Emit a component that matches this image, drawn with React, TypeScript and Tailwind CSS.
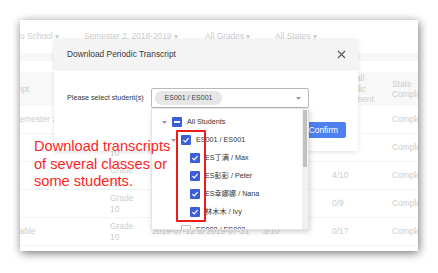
import React from 'react';

const font = { fontFamily: '"Liberation Sans", "Noto Sans CJK SC", Arial, sans-serif' };

type CheckState = 'all' | 'some' | 'none';

const Box = ({ state }: { state: CheckState }) => {
  if (state === 'none') {
    return <span className="block w-[10px] h-[10px] shrink-0 border border-[#bdbdbd] bg-white rounded-[1px]" />;
  }
  return (
    <span className="flex w-[10px] h-[10px] shrink-0 items-center justify-center bg-[#3d5ed8] rounded-[1px]">
      {state === 'some' ? (
        <span className="block w-[6px] h-[1.5px] bg-white" />
      ) : (
        <svg width="8" height="8" viewBox="0 0 8 8">
          <path d="M1.4 4.1 L3.2 5.9 L6.6 2.1" fill="none" stroke="#fff" strokeWidth="1.3" />
        </svg>
      )}
    </span>
  );
};

const Caret = () => (
  <svg width="5" height="3" viewBox="0 0 5 3" className="shrink-0">
    <polygon points="0,0 5,0 2.5,3" fill="#9a9a9a" />
  </svg>
);

const students = ['ES丁满 / Max', 'ES彭彭 / Peter', 'ES幸娜娜 / Nana', '林木木 / Ivy'];

const rows = [
  { c1: <span className="-ml-[6px]">Semester 2</span>, date: '', sub: '', done: '' },
  { c1: null, date: '', sub: '', done: '' },
  { c1: null, date: '', sub: '', done: '4/10' },
  { c1: null, date: '', sub: '', done: '0/9' },
  { c1: <span className="-ml-[33px]">Not available</span>, date: '2019-07-12 to 2019-07-31', sub: '3/10', done: '0/17' },
];

export default function App() {
  return (
    <div className="w-[438px] h-[273px] bg-white pl-[20px] pt-[20px]" style={font}>
      <div className="relative w-[398px] h-[231px] overflow-hidden bg-white shadow-[1px_2px_9px_rgba(0,0,0,0.55)]">
        {/* Background page */}
        <div className="text-[8.4px] text-[#cdcdcd] whitespace-nowrap">
          <div className="flex h-[33px] items-center">
            <span className="w-[64px]">u School ▾</span>
            <span className="w-[121px]">Semester 2, 2018-2019 ▾</span>
            <span className="w-[70px]">All Grades ▾</span>
            <span>All States ▾</span>
          </div>
          <div className="h-[8px] bg-[#f7f7f7]" />
          <div className="h-[11px]" />
          <div className="flex h-[34px] items-center bg-[#f8f8f8] leading-[10.5px]">
            <div className="w-[308px]">
              <span className="-ml-[28px]">Transcript</span>
            </div>
            <div className="w-[64px]">
              <div className="w-[46px] text-center">
                Overall
                <br />
                Periodic
                <br />
                Assessment
              </div>
            </div>
            <div className="w-[26px] overflow-hidden">
              State
              <br />
              Completion
            </div>
          </div>
          {rows.map((r, i) => (
            <div key={i} className="flex h-[28px] items-center border-b border-[#f3f3f3] leading-[10.5px]">
              <div className="w-[90px] overflow-hidden">{r.c1}</div>
              <div className="w-[42px]">
                Grade
                <br />
                10
              </div>
              <div className="w-[111px]">{r.date}</div>
              <div className="w-[65px]">{r.sub}</div>
              <div className="w-[64px] pl-[4px]">{r.done}</div>
              <div className="w-[26px] overflow-hidden">Completed</div>
            </div>
          ))}
        </div>

        {/* Modal */}
        <div className="absolute left-[34px] top-[19px] w-[304px] h-[112px] bg-white shadow-[0_1px_4px_rgba(0,0,0,0.12)]">
          <div className="flex h-[31px] items-center justify-between bg-[#f4f4f4] border-b border-[#ececec] pl-[13px] pr-[12px]">
            <span className="text-[8.4px] text-[#3a3a3a]">Download Periodic Transcript</span>
            <svg width="9" height="9" viewBox="0 0 9 9">
              <path d="M1 1 L8 8 M8 1 L1 8" stroke="#555" strokeWidth="1.1" />
            </svg>
          </div>
          <div className="flex items-center pl-[13px] pt-[18px]">
            <span className="w-[84px] text-[7.2px] text-[#333]">Please select student(s)</span>
            <div className="relative">
              <div className="flex h-[20px] w-[158px] items-center justify-between rounded-[2px] border border-[#b9b9b9] pl-[3px] pr-[7px]">
                <span className="flex h-[14px] w-[67px] items-center justify-center rounded-full bg-[#e6e6e6] text-[7px] text-[#444]">
                  ES001 / ES001
                </span>
                <Caret />
              </div>
              {/* Dropdown tree */}
              <div className="absolute left-0 top-full z-10 flex h-[122px] w-[158px] overflow-hidden border border-[#e4e4e4] bg-white shadow-[1px_2px_5px_rgba(0,0,0,0.18)]">
                <div className="flex-1 pt-[4px] text-[7.2px] text-[#333] whitespace-nowrap">
                  <div className="flex h-[18px] items-center pl-[10px]">
                    <Caret />
                    <span className="ml-[5px]"><Box state="some" /></span>
                    <span className="ml-[5px]">All Students</span>
                  </div>
                  <div className="flex h-[18px] items-center pl-[19px]">
                    <Caret />
                    <span className="ml-[5px]"><Box state="all" /></span>
                    <span className="ml-[5px]">ES001 / ES001</span>
                  </div>
                  {students.map((s) => (
                    <div key={s} className="flex h-[18px] items-center pl-[38px]">
                      <Box state="all" />
                      <span className="ml-[5px]">{s}</span>
                    </div>
                  ))}
                  <div className="flex h-[18px] items-center pl-[19px]">
                    <Caret />
                    <span className="ml-[5px]"><Box state="none" /></span>
                    <span className="ml-[5px]">ES002 / ES002</span>
                  </div>
                </div>
                <div className="w-[6px] bg-[#f1f1f1] pt-[1px] pr-[1px]">
                  <div className="h-[57px] w-[4px] rounded-[1px] bg-[#c1c1c1] ml-[1px]" />
                </div>
              </div>
            </div>
          </div>
          <div className="flex justify-end pr-[12px] pt-[14px]">
            <button className="h-[16px] rounded-[2px] bg-[#4f80f2] px-[8px] text-[8.4px] text-white">Confirm</button>
          </div>
        </div>

        {/* Annotation */}
        <div className="absolute left-[156px] top-[110px] h-[92px] w-[30px] rounded-[1px] border-2 border-[#ee1c1c] z-20" />
        <div className="absolute left-[14px] top-[118px] z-20 text-[14.6px] leading-[17.5px] text-[#ff1f1f]">
          Download transcripts
          <br />
          of several classes or
          <br />
          some students.
        </div>
      </div>
    </div>
  );
}
